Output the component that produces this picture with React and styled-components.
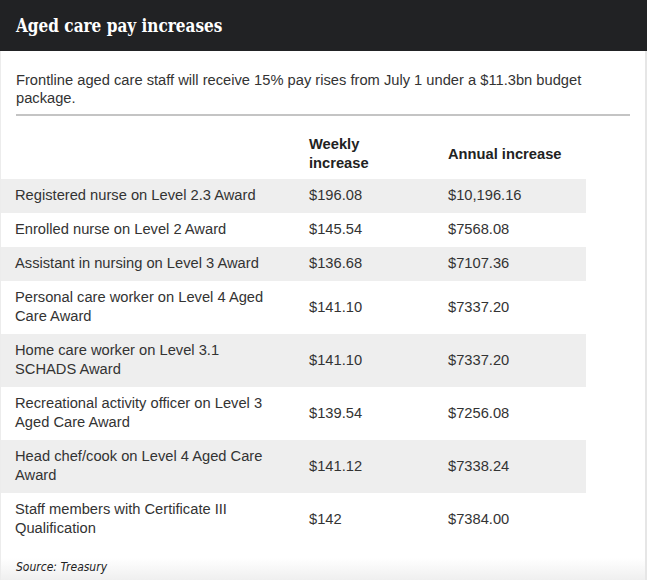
import styled, { createGlobalStyle } from "styled-components";

const GlobalStyle = createGlobalStyle`
    body {
        margin: 0;
        background: #ffffff;
        font-family: "Liberation Sans", Arial, sans-serif;
    }
`;

const rows = [
    { role: "Registered nurse on Level 2.3 Award", weekly: "$196.08", annual: "$10,196.16" },
    { role: "Enrolled nurse on Level 2 Award", weekly: "$145.54", annual: "$7568.08" },
    { role: "Assistant in nursing on Level 3 Award", weekly: "$136.68", annual: "$7107.36" },
    { role: "Personal care worker on Level 4 Aged Care Award", weekly: "$141.10", annual: "$7337.20" },
    { role: "Home care worker on Level 3.1 SCHADS Award", weekly: "$141.10", annual: "$7337.20" },
    { role: "Recreational activity officer on Level 3 Aged Care Award", weekly: "$139.54", annual: "$7256.08" },
    { role: "Head chef/cook on Level 4 Aged Care Award", weekly: "$141.12", annual: "$7338.24" },
    { role: "Staff members with Certificate III Qualification", weekly: "$142", annual: "$7384.00" },
];

const Card = styled.div`
    width: 647px;
    height: 580px;
    border-right: 2px solid #e6e6e6;
    border-left: 1px solid #ececec;
    box-sizing: border-box;
    display: flex;
    flex-direction: column;
    background: linear-gradient(to bottom, #ffffff 0, #ffffff 558px, #efefef 580px);
`;

const Header = styled.div`
    background: #212224;
    height: 51px;
    margin-left: -1px;
    margin-right: -2px;
    display: flex;
    align-items: center;
    padding: 0 16px;
`;

const Title = styled.h1`
    margin: 0;
    color: #ffffff;
    font-family: "DejaVu Serif", Georgia, serif;
    font-weight: 700;
    font-size: 18px;
    transform: scaleX(0.85);
    transform-origin: left center;
    white-space: nowrap;
`;

const Intro = styled.p`
    margin: 0 15px 0 15px;
    padding: 20px 0 7px;
    font-size: 14.7px;
    line-height: 18px;
    color: #333333;
    border-bottom: 2px solid #c4c4c4;
`;

const Table = styled.table`
    border-collapse: collapse;
    width: 585px;
    margin-top: 19px;
    table-layout: fixed;
    color: #333333;
    font-size: 14.7px;
`;

const HeadCell = styled.th`
    text-align: left;
    font-weight: 700;
    line-height: 19px;
    padding: 0 24px 6px 14px;
    vertical-align: middle;
    color: #222222;
`;

const Row = styled.tr`
    background: ${(p) => (p.$shade ? "#eeeeee" : "#ffffff")};
`;

const Cell = styled.td`
    padding: 7px 14px 8px;
    line-height: 19px;
    vertical-align: middle;
`;

const Source = styled.div`
    margin: 14px 0 0 15px;
    font-family: "Liberation Sans Narrow", "DejaVu Sans Condensed", sans-serif;
    font-style: italic;
    font-size: 12px;
    color: #222222;
`;

export default function App() {
    return (
        <>
            <GlobalStyle />
            <Card>
                <Header>
                    <Title>Aged care pay increases</Title>
                </Header>
                <Intro>
                    Frontline aged care staff will receive 15% pay rises from July 1 under a $11.3bn budget package.
                </Intro>
                <Table>
                    <colgroup>
                        <col style={{ width: 294 }} />
                        <col style={{ width: 139 }} />
                        <col style={{ width: 152 }} />
                    </colgroup>
                    <thead>
                        <tr>
                            <HeadCell />
                            <HeadCell>Weekly increase</HeadCell>
                            <HeadCell>Annual increase</HeadCell>
                        </tr>
                    </thead>
                    <tbody>
                        {rows.map((r, i) => (
                            <Row key={r.role} $shade={i % 2 === 0}>
                                <Cell>{r.role}</Cell>
                                <Cell>{r.weekly}</Cell>
                                <Cell>{r.annual}</Cell>
                            </Row>
                        ))}
                    </tbody>
                </Table>
                <Source>Source: Treasury</Source>
            </Card>
        </>
    );
}
